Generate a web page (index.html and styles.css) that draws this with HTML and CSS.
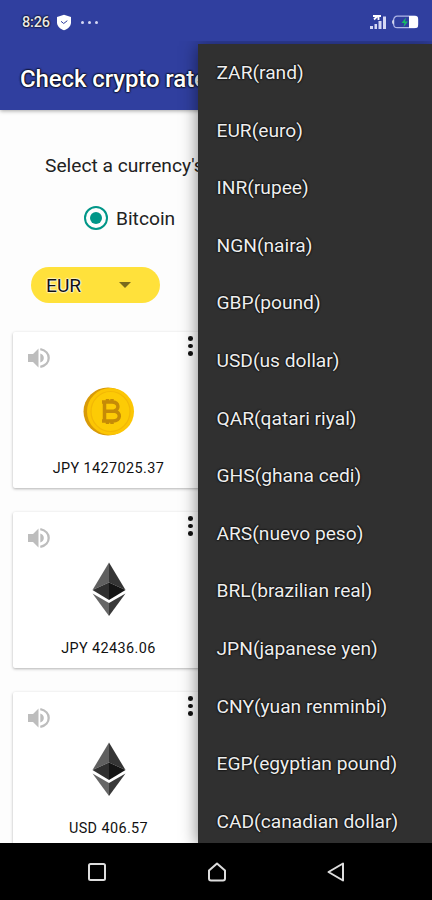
FILE: index.html
```html
<!DOCTYPE html>
<html lang="en">
<head>
    <meta charset="UTF-8">
    <meta name="viewport" content="width=device-width, initial-scale=1.0">
    <title>Check crypto rates</title>
    <link rel="stylesheet" href="styles.css">
</head>
<body>
    <div class="phone">
        <header>
            <div class="status-bar">
                <span class="time">8:26</span>
                <svg class="shield" width="16" height="17" viewBox="0 0 16 17">
                    <path d="M8 .7 15 3v5.5c0 3.800-3 6.300-7 7.800C4 14.800 1 12.300 1 8.500V3z" fill="#fff"/>
                    <path d="M5 7.300 7.700 9.500 11.300 6.700" fill="none" stroke="#303f9f" stroke-width="1"/>
                </svg>
                <span class="notifications"><i></i><i></i><i></i></span>
                <svg class="signal" width="17" height="14" viewBox="0 0 17 14">
                    <path d="M0 11h3v3H0zM4.500 9h2.500v5H4.500zM8.500 6h3v8h-3zM13 1.500h3V14h-3z" fill="#d5d8f4"/>
                    <path d="M3 1h8M8.500 1v4M4 4.500l3-3" fill="none" stroke="#fff" stroke-width="1.800"/>
                </svg>
                <svg class="battery" width="28" height="14" viewBox="0 0 28 14">
                    <rect x="2.700" y="1.200" width="24" height="11.500" rx="3.500" fill="none" stroke="#aeb5e6" stroke-width="1.200"/>
                    <path d="M2.500 4.500C.8 5 .8 9 2.500 9.500z" fill="#fff"/>
                    <path d="M18 1h6.500q2.500 0 2.500 2.500v7q0 2.500-2.500 2.500H18z" fill="#fff"/>
                    <path d="M15 2.500 10.500 8h3l-1 4L17 6.500h-3z" fill="#16bd65"/>
                </svg>
            </div>
            <h1>Check crypto rates</h1>
        </header>

        <main>
            <p class="prompt">Select a currency's rate</p>
            <div class="radio-row">
                <span class="radio"></span>
                <span class="radio-label">Bitcoin</span>
            </div>
            <div class="spinner">
                <span>EUR</span>
                <span class="arrow"></span>
            </div>

            <div class="cards">
                <div class="card">
                    <div class="card-top">
                        <svg class="speaker" width="22" height="22" viewBox="0 0 22 22">
                            <path d="M0 7h5l5.500-5.500v19L5 15H0z" fill="#bdbdbd"/>
                            <path d="M12.300 6.500C17 8 17 14 12.300 15.500z" fill="#bdbdbd"/>
                            <path d="M12.300 2.200C23.500 4.500 23.500 17.500 12.300 19.800" fill="none" stroke="#bdbdbd" stroke-width="2.300"/>
                        </svg>
                        <span class="more"><i></i><i></i><i></i></span>
                    </div>
                    <svg class="coin" width="54" height="54" viewBox="0 0 54 54">
                        <ellipse cx="26" cy="29.500" rx="24.500" ry="24" fill="#d89a08"/>
                        <ellipse cx="28.500" cy="29.500" rx="23.500" ry="23.500" fill="#fcc604"/>
                        <ellipse cx="28.500" cy="29.500" rx="19.500" ry="20" fill="#fdcb05" stroke="#f3b806" stroke-width="1.200"/>
                        <path d="M20 20h10c7.500 0 7.500 8 2 9 7.500 1 7 10-1 10H20M22.500 20v19M22.500 29.300H32M25.500 17V20M30 17V20M25.500 39v3M30 39v3" fill="none" stroke="#c58b07" stroke-width="3.500"/>
                    </svg>
                    <p class="rate">JPY 1427025.37</p>
                </div>

                <div class="card">
                    <div class="card-top">
                        <svg class="speaker" width="22" height="22" viewBox="0 0 22 22">
                            <path d="M0 7h5l5.500-5.500v19L5 15H0z" fill="#bdbdbd"/>
                            <path d="M12.300 6.500C17 8 17 14 12.300 15.500z" fill="#bdbdbd"/>
                            <path d="M12.300 2.200C23.500 4.500 23.500 17.500 12.300 19.800" fill="none" stroke="#bdbdbd" stroke-width="2.300"/>
                        </svg>
                        <span class="more"><i></i><i></i><i></i></span>
                    </div>
                    <svg class="coin" width="54" height="54" viewBox="0 0 54 54">
                        <path d="M27 .5v20L10.500 28z" fill="#606060"/>
                        <path d="M27 .5v20L43.500 28z" fill="#353535"/>
                        <path d="M27 20.500V38l-16.500-10z" fill="#303030"/>
                        <path d="M27 20.500V38l16.500-10z" fill="#141414"/>
                        <path d="M10.500 31.500 27 41V54z" fill="#666"/>
                        <path d="M43.500 31.500 27 41V54z" fill="#393939"/>
                    </svg>
                    <p class="rate">JPY 42436.06</p>
                </div>

                <div class="card">
                    <div class="card-top">
                        <svg class="speaker" width="22" height="22" viewBox="0 0 22 22">
                            <path d="M0 7h5l5.500-5.500v19L5 15H0z" fill="#bdbdbd"/>
                            <path d="M12.300 6.500C17 8 17 14 12.300 15.500z" fill="#bdbdbd"/>
                            <path d="M12.300 2.200C23.500 4.500 23.500 17.500 12.300 19.800" fill="none" stroke="#bdbdbd" stroke-width="2.300"/>
                        </svg>
                        <span class="more"><i></i><i></i><i></i></span>
                    </div>
                    <svg class="coin" width="54" height="54" viewBox="0 0 54 54">
                        <path d="M27 .5v20L10.500 28z" fill="#606060"/>
                        <path d="M27 .5v20L43.500 28z" fill="#353535"/>
                        <path d="M27 20.500V38l-16.500-10z" fill="#303030"/>
                        <path d="M27 20.500V38l16.500-10z" fill="#141414"/>
                        <path d="M10.500 31.500 27 41V54z" fill="#666"/>
                        <path d="M43.500 31.500 27 41V54z" fill="#393939"/>
                    </svg>
                    <p class="rate">USD 406.57</p>
                </div>
            </div>
        </main>

        <nav class="nav-bar">
            <svg width="20" height="20" viewBox="0 0 20 20"><rect x="2" y="2" width="16" height="16" rx="1.500"/></svg>
            <svg width="20" height="20" viewBox="0 0 20 20"><path d="M2 8.500 10 1.500l8 7V16.500q0 2-2 2H4q-2 0-2-2z"/></svg>
            <svg width="20" height="20" viewBox="0 0 20 20"><path d="M17 1.500v17L2.500 10z"/></svg>
        </nav>

        <!-- currency dropdown -->
        <ul class="menu">
            <li>ZAR(rand)</li>
            <li>EUR(euro)</li>
            <li>INR(rupee)</li>
            <li>NGN(naira)</li>
            <li>GBP(pound)</li>
            <li>USD(us dollar)</li>
            <li>QAR(qatari riyal)</li>
            <li>GHS(ghana cedi)</li>
            <li>ARS(nuevo peso)</li>
            <li>BRL(brazilian real)</li>
            <li>JPN(japanese yen)</li>
            <li>CNY(yuan renminbi)</li>
            <li>EGP(egyptian pound)</li>
            <li>CAD(canadian dollar)</li>
        </ul>
    </div>
</body>
</html>
```

FILE: styles.css
```css
* {
    margin: 0;
    padding: 0;
    box-sizing: border-box;
    font-family: Roboto, 'Liberation Sans', sans-serif;
}

body {
    background-color: #fdfdfd;
    color: #222;
}

.phone {
    position: relative;
    display: flex;
    flex-direction: column;
    width: 432px;
    height: 900px;
    overflow: hidden;
}

header {
    height: 110px;
    flex: none;
    background-color: #303f9f;
    color: #fff;
    box-shadow: 0 1px 4px rgba(0,0,0,0.35);
    z-index: 1;
}

.status-bar {
    display: flex;
    align-items: center;
    height: 44px;
    padding: 0 13px 0 22px;
}

.time {
    width: 28px;
    font-size: 14.5px;
    font-weight: 500;
    letter-spacing: -0.2px;
    color: #e8e8e8;
    text-shadow: 0 0 2px #000, 0 0 2px #000;
}

.shield {
    margin-left: 6px;
}

.notifications {
    display: flex;
    gap: 4px;
    margin-left: 9px;
}

.notifications i {
    width: 3px;
    height: 3px;
    border-radius: 50%;
    background-color: #d5d8f4;
}

.signal {
    margin-left: auto;
}

.battery {
    margin-left: 4px;
}

h1 {
    padding-left: 20px;
    font-size: 24px;
    font-weight: 500;
    letter-spacing: -0.1px;
    line-height: 70px;
    white-space: nowrap;
    text-shadow: 0 0 2px #000, 0 0 2px #000, 0 0 2px #000;
}

main {
    flex: 1;
    min-height: 0;
    overflow: hidden;
}

.prompt {
    padding: 44px 0 0 45px;
    font-size: 19.2px;
    line-height: 24px;
    white-space: nowrap;
}

.radio-row {
    display: flex;
    align-items: center;
    gap: 8px;
    height: 24px;
    margin: 28px 0 0 84px;
    font-size: 19.2px;
}

.radio {
    width: 24px;
    height: 24px;
    border: 2.400px solid #009688;
    border-radius: 50%;
    padding: 4px;
    background-color: #009688;
    background-clip: content-box;
}

.spinner {
    display: flex;
    align-items: center;
    justify-content: space-between;
    width: 129px;
    height: 36px;
    margin: 37px 0 0 31px;
    padding: 0 29px 0 15px;
    border-radius: 18px;
    background-color: #ffe13b;
    color: #111;
    font-size: 19.2px;
    text-shadow: 0 0 2px #fff, 0 0 2px #fff, 0 0 2px #fff, 0 0 1px #fff;
}

.arrow {
    border: 6px solid transparent;
    border-top-color: #7a6a1c;
    border-bottom: none;
}

.cards {
    display: flex;
    flex-direction: column;
    gap: 24px;
    padding: 29px 0 0 13px;
}

.card {
    display: flex;
    flex-direction: column;
    align-items: center;
    flex: none;
    width: 191px;
    height: 156px;
    background-color: #fff;
    border-radius: 2px;
    box-shadow: 0 1px 3px rgba(0,0,0,0.3);
}

.card-top {
    display: flex;
    justify-content: space-between;
    align-self: stretch;
    height: 50px;
    padding: 4px 11px 0 15px;
}

.speaker {
    margin-top: 11px;
}

.more {
    display: flex;
    flex-direction: column;
    gap: 3px;
}

.more i {
    width: 5px;
    height: 4.500px;
    border-radius: 50%;
    background-color: #111;
}

.coin {
    flex: none;
}

.rate {
    margin-top: 23px;
    font-size: 14.4px;
    line-height: 20px;
    letter-spacing: 0.4px;
    color: #111;
}

.nav-bar {
    display: flex;
    align-items: center;
    justify-content: space-between;
    flex: none;
    height: 57px;
    padding: 0 86px 0 87px;
    background-color: #000;
}

.nav-bar svg {
    fill: none;
    stroke: #ddd;
    stroke-width: 2;
    stroke-linejoin: round;
}

.menu {
    position: absolute;
    top: 44px;
    left: 197.500px;
    right: 0;
    height: 799px;
    overflow: hidden;
    list-style: none;
    background-color: #303030;
    color: #eee;
    box-shadow: 0 2px 16px rgba(0,0,0,0.5);
    clip-path: inset(-3px 0 0 -20px);
    z-index: 2;
}

.menu li {
    height: 57.600px;
    padding-left: 19px;
    font-size: 19.2px;
    line-height: 58.4px;
    white-space: nowrap;
    text-shadow: 0 0 2px #000, 0 0 2px #000;
}
```
